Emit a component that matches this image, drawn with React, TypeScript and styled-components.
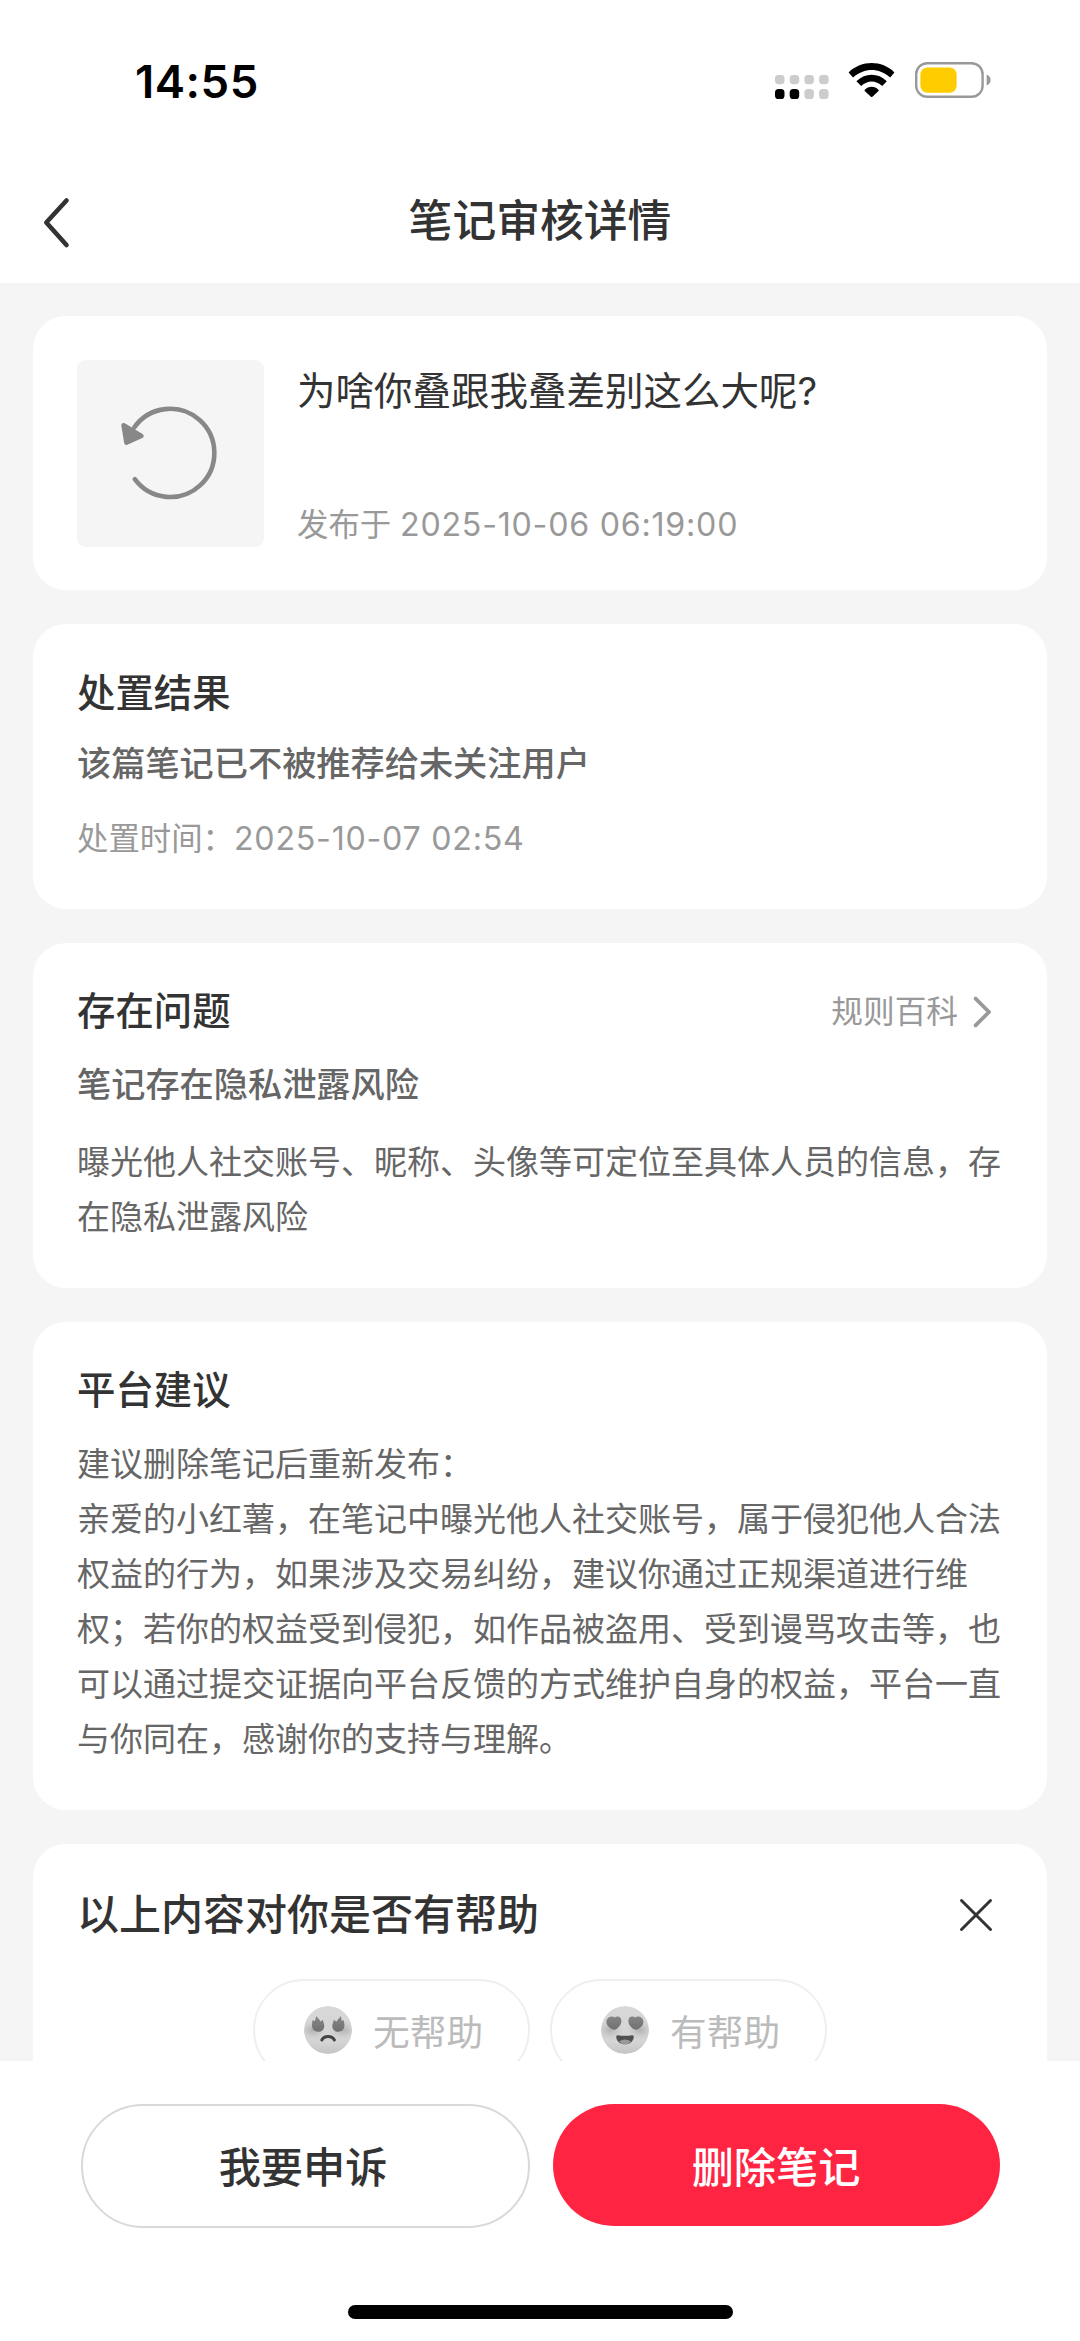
import React from 'react';
import styled, { createGlobalStyle } from 'styled-components';

const GlobalStyle = createGlobalStyle`
  * { box-sizing: border-box; }
  html, body { margin: 0; padding: 0; background: #fff; }
  body {
    font-family: Inter, "Noto Sans CJK SC", sans-serif;
    color: #333;
    text-spacing-trim: space-all;
    -webkit-font-smoothing: antialiased;
  }
  h1, h2, p { margin: 0; }
  button { font-family: inherit; cursor: pointer; }
`;

const Screen = styled.div`
  width: 1080px;
  height: 2341px;
  display: flex;
  flex-direction: column;
  overflow: hidden;
  background: #fff;
`;

const StatusBar = styled.header`
  height: 162px;
  flex: none;
  display: flex;
  justify-content: space-between;
  padding: 0 89px 0 135px;
`;

const Clock = styled.time`
  padding-top: 54px;
  font-size: 45.5px;
  line-height: 55px;
  font-weight: 600;
  letter-spacing: 0.5px;
  color: #000;
`;

const StatusIcons = styled.div`
  display: flex;
  align-items: flex-start;
  padding-top: 60px;
`;

const NavBar = styled.nav`
  height: 121px;
  flex: none;
  display: grid;
  grid-template-columns: 110px 1fr 110px;
  align-items: center;
`;

const IconButton = styled.button<{ $left?: number; $right?: number }>`
  display: flex;
  padding: 0;
  border: 0;
  background: none;
  margin: 0 ${({ $right = 0 }) => $right}px 0 ${({ $left = 0 }) => $left}px;
`;

const NavTitle = styled.h1`
  text-align: center;
  font-size: 43.8px;
  line-height: 60px;
  font-weight: 500;
  padding-bottom: 1px;
`;

const Content = styled.main`
  flex: 1;
  min-height: 0;
  overflow: hidden;
  display: flex;
  flex-direction: column;
  gap: 34px;
  padding: 33px 33px 0;
  background: #f5f5f5;
`;

const Card = styled.section<{ $top: number; $bottom: number }>`
  flex: none;
  border-radius: 33px;
  background: #fff;
  padding: ${({ $top }) => $top}px 44px ${({ $bottom }) => $bottom}px;
`;

const NoteRow = styled.div`
  display: flex;
  gap: 33px;
`;

const Thumb = styled.div`
  width: 187px;
  height: 187px;
  border-radius: 9px;
  background: #f5f5f5;
  display: flex;
`;

const NoteInfo = styled.div`
  display: flex;
  flex-direction: column;
  justify-content: space-between;
  padding: 6px 0 0;
`;

const NoteTitle = styled.p`
  font-size: 38.5px;
  line-height: 50px;
`;

const Meta = styled.p<{ $mt?: number }>`
  margin-top: ${({ $mt = 0 }) => $mt}px;
  font-size: 31.4px;
  line-height: 44px;
  color: #999;
  white-space: pre;
`;

const Digits = styled.span`
  font-size: 32.2px;
  letter-spacing: 0.75px;
`;

const HeadRow = styled.div`
  display: flex;
  justify-content: space-between;
  align-items: center;
`;

const Heading = styled.h2<{ $size?: number }>`
  font-size: ${({ $size = 38.4 }) => $size}px;
  line-height: 53px;
  font-weight: 500;
`;

const RuleLink = styled.a`
  display: flex;
  align-items: center;
  gap: 14px;
  font-size: 31.7px;
  line-height: 44px;
  color: #999;
  padding-right: 11px;
`;

const Subheading = styled.p<{ $mt: number }>`
  margin-top: ${({ $mt }) => $mt}px;
  font-size: 34.2px;
  line-height: 48px;
  font-weight: 500;
  color: #666;
`;

const Body = styled.p<{ $mt: number }>`
  margin-top: ${({ $mt }) => $mt}px;
  font-size: 33px;
  line-height: 55px;
  color: #666;
`;

const Choices = styled.div`
  display: flex;
  justify-content: center;
  gap: 20px;
  margin-top: 38px;
`;

const Choice = styled.button`
  width: 277px;
  height: 102px;
  border: 2px solid #efefef;
  border-radius: 51px;
  background: #fff;
  display: flex;
  align-items: center;
  gap: 21px;
  padding: 0 0 0 49px;
  font-size: 36.7px;
  color: #bbb;
`;

const Footer = styled.footer`
  height: 280px;
  flex: none;
  display: flex;
  flex-direction: column;
  align-items: center;
  justify-content: space-between;
  background: #fff;
  padding: 43px 0 22px;
`;

const Actions = styled.div`
  display: flex;
  align-items: flex-start;
  gap: 23px;
`;

const Action = styled.button<{ $primary?: boolean }>`
  width: ${({ $primary }) => ($primary ? 447 : 449)}px;
  height: ${({ $primary }) => ($primary ? 122 : 124)}px;
  border: ${({ $primary }) => ($primary ? '0' : '2px solid #d9d9d9')};
  border-radius: 62px;
  background: ${({ $primary }) => ($primary ? '#ff2442' : '#fff')};
  color: ${({ $primary }) => ($primary ? '#fff' : '#333')};
  font-size: 42.2px;
  font-weight: 500;
  padding: ${({ $primary }) => ($primary ? '0 0 2px' : '0 4px 4px 0')};
`;

const HomeIndicator = styled.div`
  width: 385px;
  height: 14px;
  border-radius: 7px;
  background: #000;
`;

const SignalIcon = () => (
  <svg width="54" height="42" viewBox="775 60 54 42">
    {[0, 1, 2, 3].map((i) => (
      <g key={i}>
        <rect x={775 + i * 14.7} y="75" width="9.5" height="9.2" rx="3.4" fill="#ccc" />
        <rect x={775 + i * 14.7} y="89" width="9.5" height="10" rx="3.6" fill={i < 2 ? '#000' : '#ccc'} />
      </g>
    ))}
  </svg>
);

const WifiIcon = () => (
  <svg width="86" height="42" viewBox="829 60 86 42">
    <path d="M848.6 72.4C861.5 60 882 60 894.4 72.4L890.2 77.4C879 67.4 864.4 67.4 853 77.4Z" />
    <path d="M856.4 81.2C865.2 72.6 878.2 72.6 886.8 81.2L882.2 86C875.8 80 867.6 80 861.2 86Z" />
    <path d="M864.6 89.9C868.6 85.8 874.8 85.8 878.6 89.9Q878.8 90.6 878.3 91.2L872.4 96.8Q871.6 97.3 870.9 96.8L865 91.2Q864.3 90.6 864.6 89.9Z" />
  </svg>
);

const BatteryIcon = () => (
  <svg width="76" height="42" viewBox="915 60 76 42">
    <rect x="916.2" y="63.2" width="66.4" height="33.6" rx="11" fill="none" stroke="#999" strokeWidth="2.4" />
    <rect x="920.4" y="67.5" width="36.2" height="25.2" rx="7" fill="#fc0" />
    <path d="M986.6 74.6Q990.6 76.4 990.6 80T986.6 85.4Z" fill="#999" />
  </svg>
);

const BackIcon = () => (
  <svg width="30" height="54" viewBox="42 195.8 30 54" fill="none" stroke="#333" strokeWidth="4.6" strokeLinecap="round" strokeLinejoin="round">
    <path d="M66.5 200.3L46.3 222.3L66.5 244.8" />
  </svg>
);

const ReloadIcon = () => (
  <svg width="187" height="187" viewBox="77.8 360 187 187">
    <path d="M135 427.5A44.1 44.1 0 1 1 135.6 479.2" fill="none" stroke="#888" strokeWidth="4.6" strokeLinecap="round" />
    <path d="M124.4 425.2L142.2 436L127.2 442.6Z" fill="#888" stroke="#888" strokeWidth="4.6" strokeLinejoin="round" />
  </svg>
);

const ChevronIcon = () => (
  <svg width="20" height="34" viewBox="0 0 20 34" fill="none" stroke="#999" strokeWidth="3.8" strokeLinecap="round" strokeLinejoin="round">
    <path d="M3.6 3.6L17 17L3.6 30.4" />
  </svg>
);

const CloseIcon = () => (
  <svg width="34" height="34" viewBox="0 0 34 34" fill="none" stroke="#333" strokeWidth="3" strokeLinecap="round">
    <path d="M2.5 2.5L31.5 31.5M31.5 2.5L2.5 31.5" />
  </svg>
);

const FaceDefs = ({ id }: { id: string }) => (
  <defs>
    <linearGradient id={`${id}-skin`} x1="0" y1="0" x2="0" y2="1">
      <stop offset="0" stopColor="#d8d8d8" />
      <stop offset="0.75" stopColor="#d4d4d4" />
      <stop offset="1" stopColor="#c4c4c4" />
    </linearGradient>
    <radialGradient id={`${id}-shade`}>
      <stop offset="0" stopColor="#999" stopOpacity="0.6" />
      <stop offset="1" stopColor="#b4b4b4" stopOpacity="0" />
    </radialGradient>
    <linearGradient id={`${id}-eye`} x1="0" y1="0" x2="0" y2="1">
      <stop offset="0" stopColor="#868686" />
      <stop offset="1" stopColor="#707070" />
    </linearGradient>
    <clipPath id={`${id}-clip`}>
      <circle cx="24" cy="24" r="24" />
    </clipPath>
  </defs>
);

const FaceBase = ({ id }: { id: string }) => (
  <g clipPath={`url(#${id}-clip)`}>
    <circle cx="24" cy="24" r="24" fill={`url(#${id}-skin)`} />
    <ellipse cx="9" cy="24" rx="13" ry="9" fill={`url(#${id}-shade)`} />
    <ellipse cx="39" cy="24" rx="13" ry="9" fill={`url(#${id}-shade)`} />
  </g>
);

const AngryFace = () => (
  <svg width="48" height="48" viewBox="0 0 48 48">
    <FaceDefs id="angry" />
    <FaceBase id="angry" />
    <g fill="url(#angry-eye)">
      <path d="M12.4 10C14 13 15.8 13.4 16.6 15.8C17.5 14.8 18.2 14.4 19 13.8C18.8 15.8 20.4 17.4 20.3 20C20.2 23.6 17.6 25.8 14.2 25.8C10.6 25.8 8 23.2 8 19.6C8 17.6 8.2 16 8.6 14.2C9.6 14.4 10.2 14.6 10.8 15.2C11.4 13.6 11.6 12 12.4 10Z" />
      <path d="M36.8 10C35.2 13 33.4 13.4 32.4 15.8C31.4 14.8 30.6 14.4 29.8 13.8C29.8 15.8 28.2 17.4 28.3 20C28.4 23.6 31 25.8 34.2 25.8C37.8 25.8 40.4 23.2 40.4 19.6C40.4 17.6 40.2 16 39.8 14.2C38.8 14.4 38.4 14.6 37.8 15.2C37.4 13.6 37.4 12 36.8 10Z" />
    </g>
    <path d="M17.8 34C20.2 29.2 28 29.2 30.4 34" fill="none" stroke="#444" strokeWidth="3" strokeLinecap="round" />
  </svg>
);

const LoveFace = () => (
  <svg width="48" height="48" viewBox="0 0 48 48">
    <FaceDefs id="love" />
    <FaceBase id="love" />
    <g fill="url(#love-eye)">
      <path d="M13.8 11.6C15.8 9.6 20.6 10.2 20.4 15.2C20.2 19.4 17.4 21.8 14.2 23.6Q13.2 24.1 12 23.6C8.4 22 5.4 19.4 5.4 15.8C5.4 11.4 10.8 9 13.8 11.6Z" />
      <path d="M34.2 11.6C32.2 9.6 27.2 10.2 27.4 15.2C27.6 19.4 30.4 21.8 33.8 23.6Q34.8 24.1 36 23.6C39.6 22 42.4 19.4 42.4 15.8C42.4 11.4 37.2 9 34.2 11.6Z" />
    </g>
    <path d="M17 29.2C21 30 27 30 31 29.2Q33 29 32.8 31.2C32 36 28.6 38.2 24 38.2S16 36 15.2 31.2Q15 29 17 29.2Z" fill="#505050" />
    <path d="M18 35.5Q24 31.6 30 35.5Q27.6 38.2 24 38.2T18 35.5Z" fill="#999" />
  </svg>
);

export default function App() {
  return (
    <Screen>
      <GlobalStyle />
      <StatusBar>
        <Clock>14:55</Clock>
        <StatusIcons>
          <SignalIcon />
          <WifiIcon />
          <BatteryIcon />
        </StatusIcons>
      </StatusBar>
      <NavBar>
        <IconButton $left={42} aria-label="返回">
          <BackIcon />
        </IconButton>
        <NavTitle>笔记审核详情</NavTitle>
      </NavBar>

      <Content>
        <Card $top={44} $bottom={43}>
          <NoteRow>
            <Thumb>
              <ReloadIcon />
            </Thumb>
            <NoteInfo>
              <NoteTitle>为啥你叠跟我叠差别这么大呢?</NoteTitle>
              <Meta>
                发布于 <Digits>2025-10-06 06:19:00</Digits>
              </Meta>
            </NoteInfo>
          </NoteRow>
        </Card>

        <Card $top={43} $bottom={48}>
          <Heading>处置结果</Heading>
          <Subheading $mt={20}>该篇笔记已不被推荐给未关注用户</Subheading>
          <Meta $mt={29}>
            处置时间：<Digits>2025-10-07 02:54</Digits>
          </Meta>
        </Card>

        <Card $top={42} $bottom={43}>
          <HeadRow>
            <Heading>存在问题</Heading>
            <RuleLink>
              规则百科
              <ChevronIcon />
            </RuleLink>
          </HeadRow>
          <Subheading $mt={23}>笔记存在隐私泄露风险</Subheading>
          <Body $mt={26}>曝光他人社交账号、昵称、头像等可定位至具体人员的信息，存在隐私泄露风险</Body>
        </Card>

        <Card $top={42} $bottom={43}>
          <Heading>平台建议</Heading>
          <Body $mt={20}>
            建议删除笔记后重新发布：
            <br />
            亲爱的小红薯，在笔记中曝光他人社交账号，属于侵犯他人合法权益的行为，如果涉及交易纠纷，建议你通过正规渠道进行维权；若你的权益受到侵犯，如作品被盗用、受到谩骂攻击等，也可以通过提交证据向平台反馈的方式维护自身的权益，平台一直与你同在，感谢你的支持与理解。
          </Body>
        </Card>

        <Card $top={44} $bottom={44}>
          <HeadRow>
            <Heading $size={42}>以上内容对你是否有帮助</Heading>
            <IconButton $right={10} aria-label="关闭">
              <CloseIcon />
            </IconButton>
          </HeadRow>
          <Choices>
            <Choice>
              <AngryFace />
              无帮助
            </Choice>
            <Choice>
              <LoveFace />
              有帮助
            </Choice>
          </Choices>
        </Card>
      </Content>

      <Footer>
        <Actions>
          <Action>我要申诉</Action>
          <Action $primary>删除笔记</Action>
        </Actions>
        <HomeIndicator />
      </Footer>
    </Screen>
  );
}
